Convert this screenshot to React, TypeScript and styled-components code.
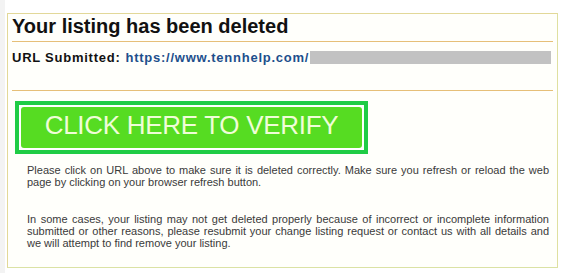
import React from "react";
import styled, { createGlobalStyle } from "styled-components";

const GlobalStyle = createGlobalStyle`
  html, body {
    margin: 0;
    padding: 0;
    background: #f3f3f3;
    font-family: "Liberation Sans", Arial, sans-serif;
  }
`;

function App() {
  return (
    <>
      <GlobalStyle />
      <Page>
        <Notice>
          <Title>Your listing has been deleted</Title>
          <UrlRow>
            <Label>URL Submitted:</Label>
            <UrlLink href="#">https://www.tennhelp.com/</UrlLink>
            <Redacted />
          </UrlRow>
          <VerifyFrame>
            <VerifyButton>CLICK HERE TO VERIFY</VerifyButton>
          </VerifyFrame>
          <Body>
            <Paragraph>
              Please click on URL above to make sure it is deleted correctly.
              Make sure you refresh or reload the web page by clicking on your
              browser refresh button.
            </Paragraph>
            <Paragraph>
              In some cases, your listing may not get deleted properly because
              of incorrect or incomplete information submitted or other
              reasons, please resubmit your change listing request or contact
              us with all details and we will attempt to find remove your
              listing.
            </Paragraph>
          </Body>
        </Notice>
      </Page>
    </>
  );
}

export default App;

const Page = styled.div`
  margin-left: 5px;
  min-height: 273px;
  box-sizing: border-box;
  padding: 13px 6px 5px 2px;
  background: #ffffff;
`;

const Notice = styled.div`
  width: 551px;
  height: 255px;
  box-sizing: border-box;
  border: 1px solid #e2d898;
  border-bottom-color: #dbe2a4;
  border-right-color: #dfe0a0;
  background: #fffffb;
  padding: 0 4px;
`;

const Title = styled.h1`
  margin: 0;
  font-size: 20px;
  line-height: 24px;
  font-weight: 700;
  color: #111;
  padding-bottom: 3px;
  border-bottom: 1px solid #e6bf78;
`;

const UrlRow = styled.div`
  display: flex;
  align-items: center;
  height: 16px;
  margin-top: 7px;
  padding-bottom: 25px;
  border-bottom: 1px solid #e6bf78;
  font-size: 13px;
  font-weight: 700;
  letter-spacing: 0.75px;
`;

const Label = styled.span`
  color: #111;
  margin-right: 5px;
`;

const UrlLink = styled.a`
  color: #1d4f8c;
  text-decoration: none;
`;

const Redacted = styled.span`
  display: block;
  flex: 1;
  height: 13px;
  margin: 0 2px 0 1px;
  background: #c2c2c2;
`;

const VerifyFrame = styled.div`
  display: inline-block;
  margin: 10px 0 0 3px;
  border: 4px solid #1fcc45;
  padding: 2px;
  background: #ffffff;
`;

const VerifyButton = styled.div`
  width: 341px;
  height: 41px;
  border-radius: 3px;
  background: #56dc22;
  color: #f0fdd8;
  font-size: 26px;
  letter-spacing: -0.3px;
  display: flex;
  align-items: center;
  justify-content: center;
  padding-bottom: 4px;
  box-sizing: border-box;
`;

const Body = styled.div`
  padding: 10px 4px 0 15px;
`;

const Paragraph = styled.p`
  margin: 0 0 25px;
  font-size: 11px;
  line-height: 12px;
  color: #3a3a3a;
  text-align: justify;
`;
